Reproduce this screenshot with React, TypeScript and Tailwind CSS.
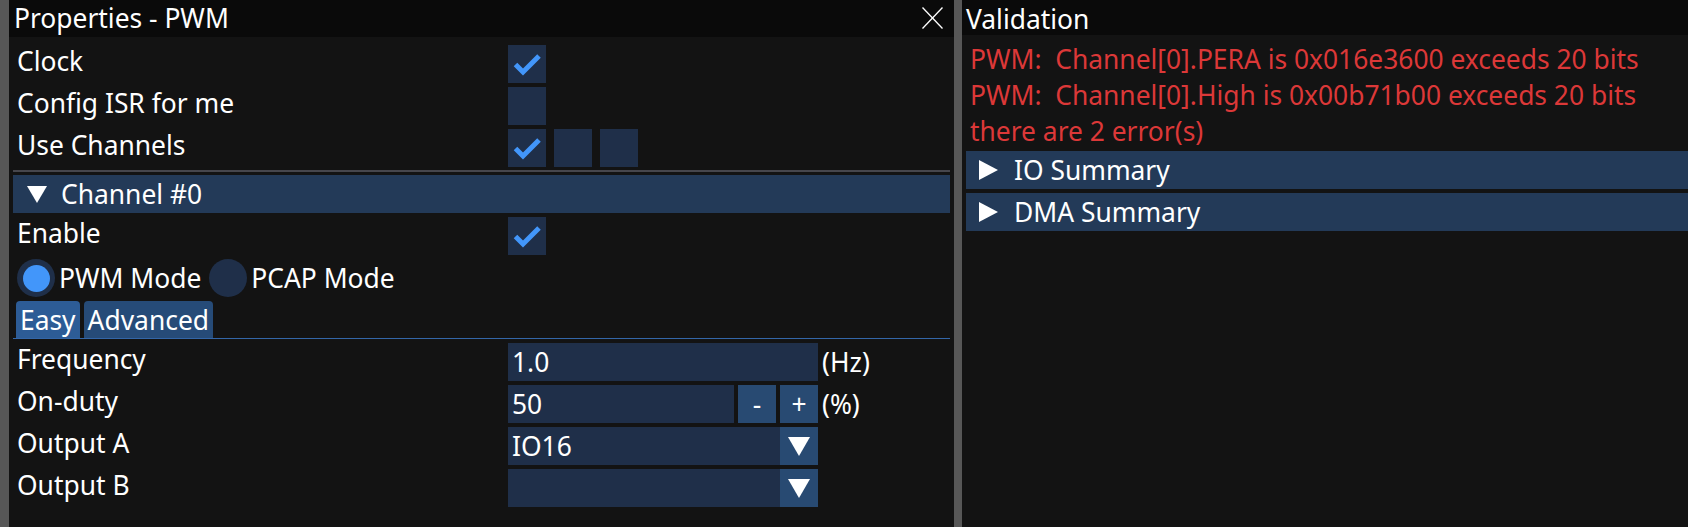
import React from 'react';

const FRAME = 'bg-[#1f2f49]';

function Check({ on }: { on?: boolean }) {
  return (
    <div className={`w-[38px] h-[38px] shrink-0 ${FRAME}`}>
      {on && (
        <svg width="38" height="38" viewBox="0 0 38 38">
          <polyline points="7.5,19.5 15,27 31,11" fill="none" stroke="#4296fa" strokeWidth="5" />
        </svg>
      )}
    </div>
  );
}

function DownTri({ w = 20, h = 17 }: { w?: number; h?: number }) {
  return (
    <svg width={w} height={h} viewBox={`0 0 ${w} ${h}`}>
      <polygon points={`0,0 ${w},0 ${w / 2},${h}`} fill="#ffffff" />
    </svg>
  );
}

function RightTri() {
  return (
    <svg width="19" height="20" viewBox="0 0 19 20">
      <polygon points="0,0 19,10 0,20" fill="#ffffff" />
    </svg>
  );
}

function Row({ label, children }: { label: string; children?: React.ReactNode }) {
  return (
    <div className="flex items-start h-[38px] mt-[4px] px-[4px]">
      <div className="w-[491px] shrink-0 leading-[32px]">{label}</div>
      <div className="flex items-start gap-[8px]">{children}</div>
    </div>
  );
}

function Header({ label, open }: { label: string; open?: boolean }) {
  return (
    <div className="flex items-start h-[38px] mt-[4px] bg-[#233a58]">
      <div className={`w-[48px] h-[38px] flex items-center ${open ? 'pl-[14px]' : 'pl-[13px]'}`}>
        {open ? <DownTri /> : <RightTri />}
      </div>
      <div className="pt-[3px] leading-[32px]">{label}</div>
    </div>
  );
}

function Radio({ label, on }: { label: string; on?: boolean }) {
  return (
    <div className="flex items-start">
      <div className="w-[38px] h-[38px] rounded-full bg-[#1f2f49] flex items-center justify-center">
        {on && <div className="w-[27px] h-[27px] rounded-full bg-[#4296fa]" />}
      </div>
      <div className="ml-[4px] pt-[3px] leading-[32px]">{label}</div>
    </div>
  );
}

function Combo({ value }: { value: string }) {
  return (
    <div className={`flex w-[310px] h-[38px] ${FRAME}`}>
      <div className="flex-1 pl-[4px] pt-[3px] leading-[32px]">{value}</div>
      <div className="w-[38px] h-[38px] bg-[#284a72] flex items-center justify-center">
        <DownTri w={22} h={19} />
      </div>
    </div>
  );
}

export default function App() {
  const errors = [
    'PWM:  Channel[0].PERA is 0x016e3600 exceeds 20 bits',
    'PWM:  Channel[0].High is 0x00b71b00 exceeds 20 bits',
    'there are 2 error(s)',
  ];

  return (
    <div className="flex w-[1688px] h-[527px] overflow-hidden bg-[#575757] pl-[9px] gap-[8px] text-[26.4px] text-white font-['Noto_Sans',sans-serif]">
      {/* Properties window */}
      <div className="w-[945px] shrink-0 flex flex-col">
        <div className="h-[37px] bg-[#0a0a0a] flex items-start justify-between pl-[5px] pr-[11px] pt-[2px]">
          <span className="leading-[32px]">Properties - PWM</span>
          <svg width="21" height="22" viewBox="0 0 21 22" className="mt-[5px]">
            <line x1="0.5" y1="0.5" x2="20.5" y2="21.5" stroke="#ffffff" strokeWidth="1.3" />
            <line x1="20.5" y1="0.5" x2="0.5" y2="21.5" stroke="#ffffff" strokeWidth="1.3" />
          </svg>
        </div>
        <div className="flex-1 bg-[#131313] px-[4px] pt-[4px]">
          <Row label="Clock">
            <Check on />
          </Row>
          <Row label="Config ISR for me">
            <Check />
          </Row>
          <Row label="Use Channels">
            <Check on />
            <Check />
            <Check />
          </Row>
          <div className="h-[2px] mt-[3px] mb-[-1px] bg-[#46464c]" />
          <Header label="Channel #0" open />
          <Row label="Enable">
            <Check on />
          </Row>
          <div className="flex items-start gap-[8px] h-[38px] mt-[4px] px-[4px]">
            <Radio label="PWM Mode" on />
            <Radio label="PCAP Mode" />
          </div>
          {/* tab bar */}
          <div className="mt-[4px]">
            <div className="flex items-end gap-[4px] h-[37px] pl-[3px]">
              <div className="h-[37px] px-[4px] pt-[3px] leading-[32px] rounded-t-[4px] bg-[#2d5c96]">Easy</div>
              <div className="h-[37px] px-[4px] pt-[3px] leading-[32px] rounded-t-[4px] bg-[#264b78]">Advanced</div>
            </div>
            <div className="h-[1px] bg-[#3366a8]" />
          </div>
          <div className="flex items-start h-[38px] mt-[4px] px-[4px]">
            <div className="w-[491px] shrink-0 leading-[32px]">Frequency</div>
            <div className={`w-[310px] h-[38px] pl-[4px] pt-[3px] leading-[32px] ${FRAME}`}>1.0</div>
            <div className="ml-[4px] pt-[3px] leading-[32px]">(Hz)</div>
          </div>
          <div className="flex items-start h-[38px] mt-[4px] px-[4px]">
            <div className="w-[491px] shrink-0 leading-[32px]">On-duty</div>
            <div className={`w-[226px] h-[38px] pl-[4px] pt-[3px] leading-[32px] ${FRAME}`}>50</div>
            <div className="ml-[4px] w-[38px] h-[38px] bg-[#284a72] pt-[3px] leading-[32px] text-center">-</div>
            <div className="ml-[4px] w-[38px] h-[38px] bg-[#284a72] pt-[3px] leading-[32px] text-center">+</div>
            <div className="ml-[4px] pt-[3px] leading-[32px]">(%)</div>
          </div>
          <div className="flex items-start h-[38px] mt-[4px] px-[4px]">
            <div className="w-[491px] shrink-0 leading-[32px]">Output A</div>
            <Combo value="IO16" />
          </div>
          <div className="flex items-start h-[38px] mt-[4px] px-[4px]">
            <div className="w-[491px] shrink-0 leading-[32px]">Output B</div>
            <Combo value="" />
          </div>
        </div>
      </div>

      {/* Validation window */}
      <div className="flex-1 flex flex-col">
        <div className="h-[35px] bg-[#0a0a0a] pl-[4px]">
          <span className="leading-[32px]">Validation</span>
        </div>
        <div className="flex-1 bg-[#131313] pl-[4px] pt-[4px]">
          {errors.map((e) => (
            <div key={e} className="mt-[4px] pl-[4px] leading-[32px] whitespace-pre text-[#dc3838]">
              {e}
            </div>
          ))}
          <Header label="IO Summary" />
          <Header label="DMA Summary" />
        </div>
      </div>
    </div>
  );
}
